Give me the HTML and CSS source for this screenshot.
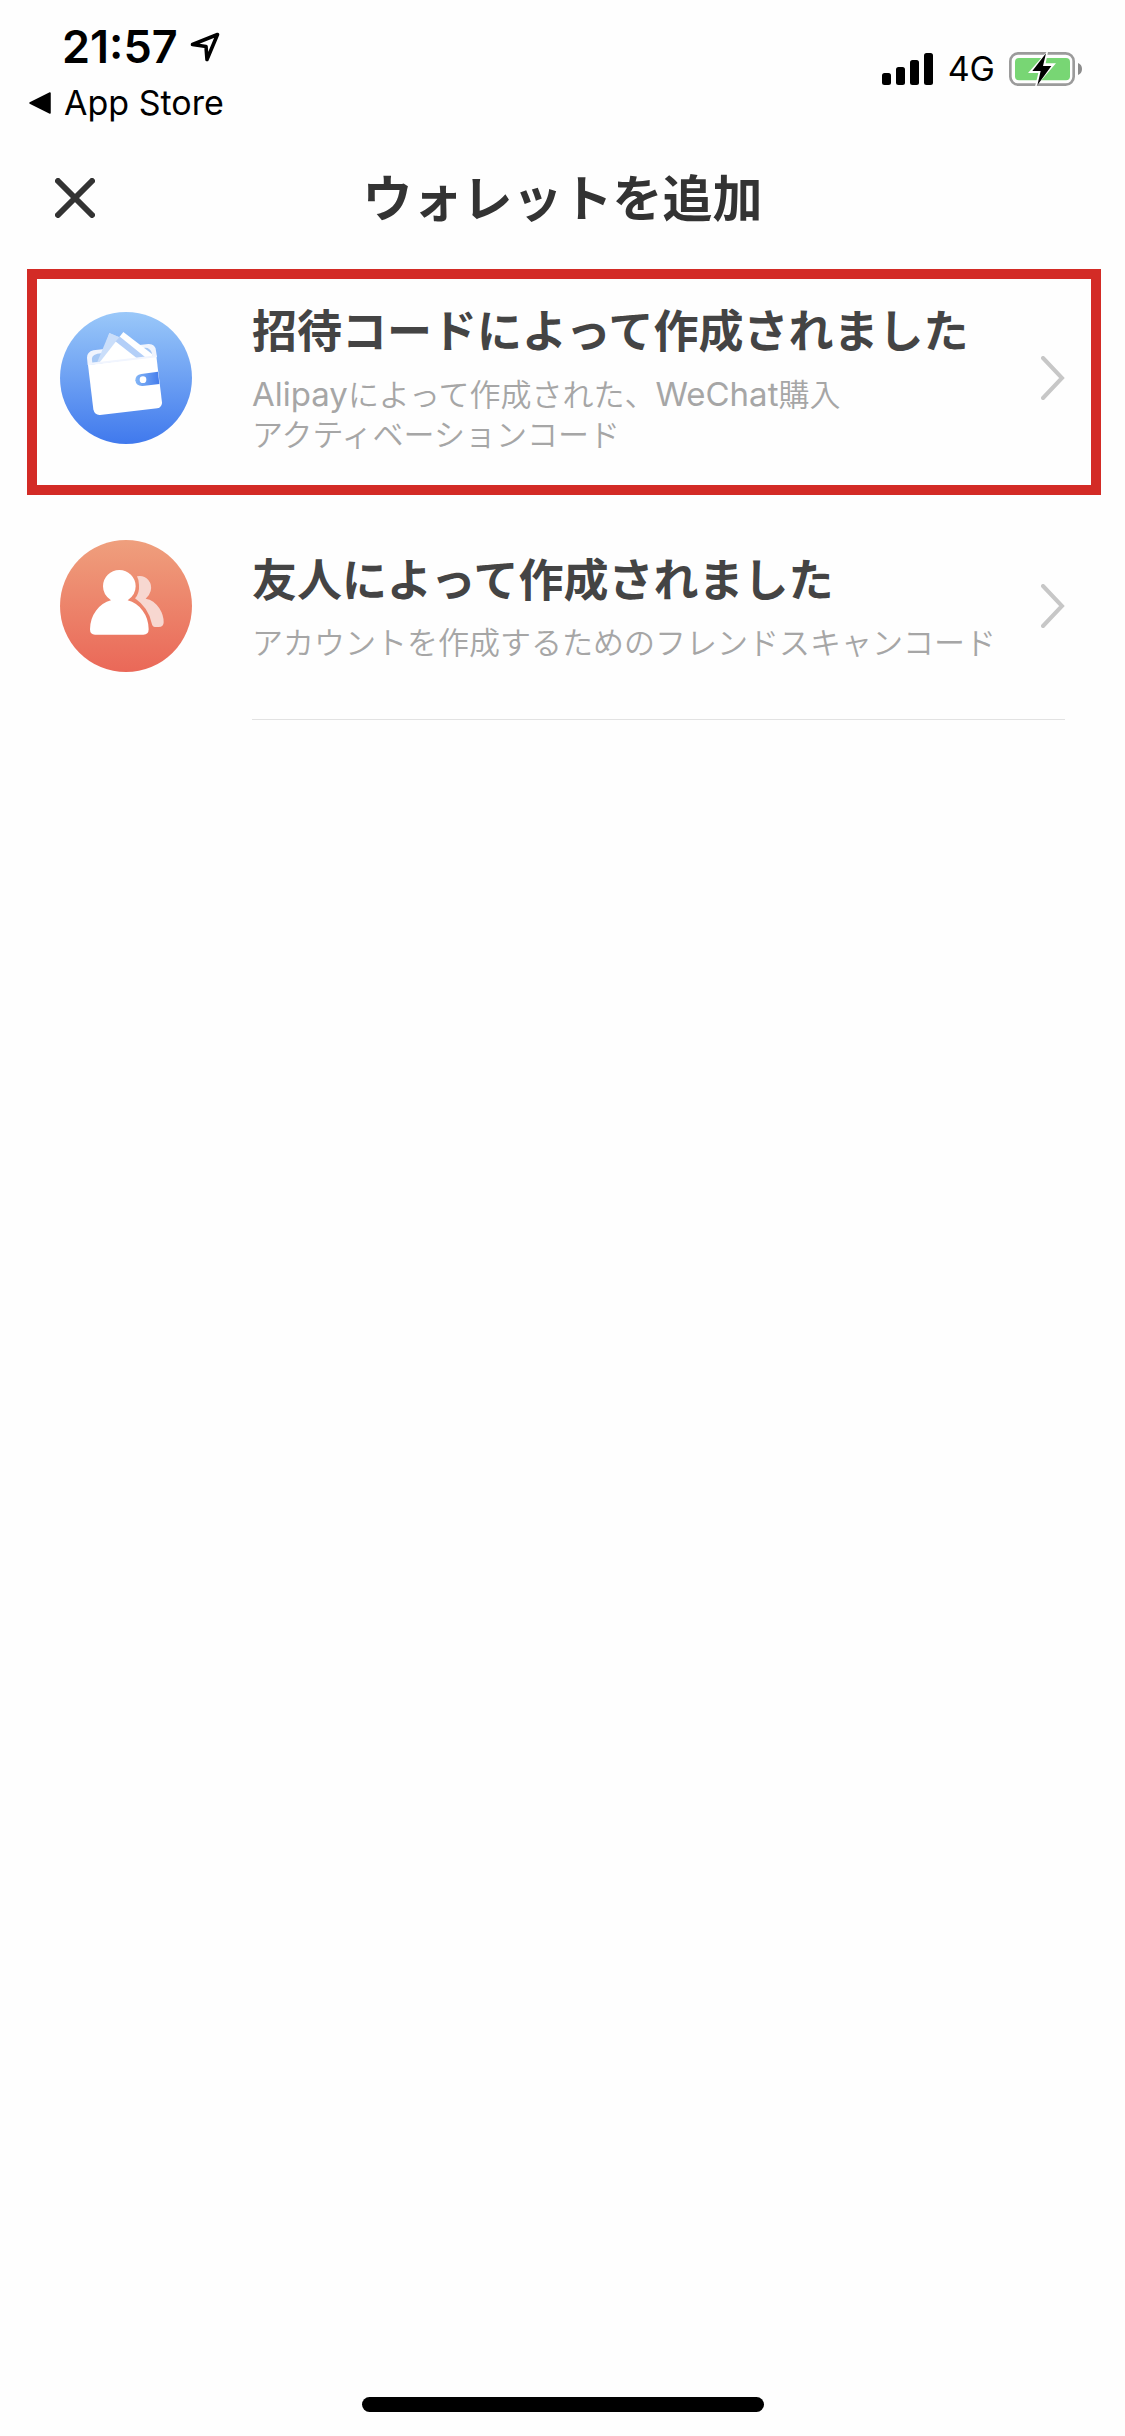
FILE: index.html
```html
<!DOCTYPE html>
<html lang="ja">
<head>
<meta charset="utf-8">
<meta name="viewport" content="width=device-width, initial-scale=1">
<title>ウォレットを追加</title>
<link rel="stylesheet" href="styles.css">
</head>
<body>
<div class="screen">
  <div class="status">
    <div class="status-left">
      <div class="clock">
        <time>21:57</time>
        <svg class="location" viewBox="0 0 30 30" aria-hidden="true"><path d="M2.500 12.500 L27.500 2.500 L17 27.500 L16 14.500 Z" fill="none" stroke="#000" stroke-width="3.600" stroke-linejoin="round"/></svg>
      </div>
      <a class="back" href="#">
        <svg class="back-arrow" viewBox="0 0 22 22" aria-hidden="true"><path d="M1 11 L21 1 V21 Z" stroke="#000" stroke-width="1.500" stroke-linejoin="round"/></svg>
        <span>App Store</span>
      </a>
    </div>
    <div class="status-right">
      <svg class="signal" viewBox="0 0 52 32" aria-hidden="true">
        <rect x="0" y="20" width="9" height="12" rx="2.500"/>
        <rect x="14" y="14" width="9" height="18" rx="2.500"/>
        <rect x="28" y="7" width="9" height="25" rx="2.500"/>
        <rect x="42" y="0" width="9" height="32" rx="2.500"/>
      </svg>
      <span class="network">4G</span>
      <svg class="battery" viewBox="447 66 219 102" aria-hidden="true">
        <rect x="451" y="70" width="190" height="94" rx="24" fill="none" stroke="#9b9b9b" stroke-width="8"/>
        <rect x="465" y="84" width="165" height="67" rx="12" fill="#78d674"/>
        <path d="M654 99 Q666 104 666 117 Q666 130 654 135 Z" fill="#8c8c8c"/>
        <path d="M565 60 L504 129 H535 L524 174 L588 100 H557 Z" fill="#fefefe"/>
        <path d="M558 70 L517 123 H542 L532 166 L574 108 H549 Z" fill="#000"/>
      </svg>
    </div>
  </div>

  <header class="nav">
    <button class="close" type="button" aria-label="閉じる">
      <svg viewBox="0 0 40 40" aria-hidden="true"><path d="M3 3 L37 37 M37 3 L3 37" stroke="#333" stroke-width="6" stroke-linecap="round"/></svg>
    </button>
    <h1>ウォレットを追加</h1>
  </header>

  <main>
    <ul class="options">
      <li class="option highlighted">
        <a class="option-link" href="#">
          <svg class="option-icon" viewBox="120 156 396 396" aria-hidden="true">
            <defs>
              <linearGradient id="blue" x1="0" y1="0" x2="0" y2="1"><stop offset="0" stop-color="#9ac8f9"/><stop offset="1" stop-color="#4079ed"/></linearGradient>
              <linearGradient id="clasp" x1="0" y1="0" x2="1" y2="0"><stop offset="0" stop-color="#84b6f6"/><stop offset="1" stop-color="#447cec"/></linearGradient>
            </defs>
            <circle cx="318" cy="354" r="198" fill="url(#blue)"/>
            <path d="M203 315 L201 293 Q201 276 220 271 L385 252 Q406 251 408 272 L411 291 Z" fill="#f0f4fd"/>
            <path d="M217 308 Q210 286 232 281 L370 264 Q389 260 396 280 L397 291 Z" fill="#a6c8f5"/>
            <path d="M268 219 L298 232 L262 306 L231 308 Z" fill="#cadefa"/>
            <path d="M310 216 L397 283 L396 291 L238 308 Z" fill="#fff"/>
            <path d="M298 229 L376 292 L350 294 L284 242 Z" fill="#b3cff8"/>
            <path d="M268 219 L298 232 L286 245 L257 252 Z" fill="#cadefa"/>
            <path d="M204 315 L409 289 L426 427 Q427 441 412 445 L240 465 Q224 466 220 448 Z" fill="#fff"/>
            <path d="M204 310 L409 286 L410 292 L204 316 Z" fill="#f1f5fe"/>
            <path d="M414 335 L364 342 Q346 345 346 361 Q348 379 368 378 L418 372 Z" fill="url(#clasp)"/>
            <circle cx="369" cy="359" r="10" fill="#fff"/>
          </svg>
          <span class="option-body">
            <span class="option-text">
              <strong>招待コードによって作成されました</strong>
              <small><span class="latin">Alipay</span>によって作成された、<span class="latin">WeChat</span>購入<br>アクティベーションコード</small>
            </span>
            <svg class="chevron" viewBox="0 0 24 44" aria-hidden="true"><path d="M2 2 L21 22 L2 42" fill="none" stroke="#c7c7c7" stroke-width="4" stroke-linecap="round"/></svg>
          </span>
        </a>
      </li>
      <li class="option">
        <a class="option-link" href="#">
          <svg class="option-icon" viewBox="120 120 396 396" aria-hidden="true">
            <defs>
              <linearGradient id="coral" x1="0" y1="0" x2="0" y2="1"><stop offset="0" stop-color="#ef9f7d"/><stop offset="1" stop-color="#ea6858"/></linearGradient>
            </defs>
            <circle cx="318" cy="318" r="198" fill="url(#coral)"/>
            <path d="M351 229 Q372 225 385 240 Q397 255 392 273 Q388 288 377 296 Q402 300 418 325 Q431 345 431 367 Q431 381 416 381 H405 Q397 381 395 370 Q386 324 345 295 Q359 280 357 255 Q357 240 351 229 Z" fill="#f7d7d0"/>
            <path d="M273 301 Q249 285 249 259 A49 49 0 0 1 347 259 Q347 285 323 301 Q350 308 368 332 Q386 356 386 388 Q386 404 370 404 H225 Q210 404 210 388 Q210 356 228 332 Q246 308 273 301 Z" fill="#fff"/>
          </svg>
          <span class="option-body">
            <span class="option-text">
              <strong>友人によって作成されました</strong>
              <small>アカウントを作成するためのフレンドスキャンコード</small>
            </span>
            <svg class="chevron" viewBox="0 0 24 44" aria-hidden="true"><path d="M2 2 L21 22 L2 42" fill="none" stroke="#c7c7c7" stroke-width="4" stroke-linecap="round"/></svg>
          </span>
        </a>
      </li>
    </ul>
  </main>

  <div class="home-indicator"></div>
</div>
</body>
</html>
```

FILE: styles.css
```css
* {
  box-sizing: border-box;
}

body {
  margin: 0;
  background: #fefefe;
  color: #000;
  font-family: Inter, "Noto Sans CJK JP", sans-serif;
}

svg {
  display: block;
  flex: none;
}

a {
  color: inherit;
  text-decoration: none;
}

.screen {
  display: flex;
  flex-direction: column;
  min-height: 100vh;
}

/* Status bar */
.status {
  display: flex;
  justify-content: space-between;
  align-items: flex-start;
  padding: 20px 43px 9px 29px;
}

.status-left {
  display: flex;
  flex-direction: column;
  gap: 9px;
}

.clock {
  display: flex;
  align-items: center;
  gap: 12px;
  padding-left: 33px;
  font-size: 45px;
  font-weight: 600;
  line-height: 54px;
}

.location {
  width: 30px;
  height: 30px;
}

.back {
  display: flex;
  align-items: center;
  gap: 13px;
  font-size: 34px;
  line-height: 40px;
}

.back-arrow {
  width: 22px;
  height: 22px;
}

.status-right {
  display: flex;
  align-items: center;
  gap: 14px;
  padding-top: 29px;
  font-size: 34px;
  line-height: 40px;
}

.signal {
  width: 52px;
  height: 32px;
}

.battery {
  width: 73px;
  height: 34px;
}

/* Title bar */
.nav {
  display: grid;
  grid-template-columns: 1fr auto 1fr;
  align-items: center;
  height: 132px;
  padding: 0 55px;
}

.close {
  width: 40px;
  height: 40px;
  padding: 0;
  border: 0;
  background: none;
}

.close svg {
  width: 100%;
  height: 100%;
}

.nav h1 {
  margin: 0;
  padding-bottom: 6px;
  color: #333;
  font-family: "Noto Sans CJK JP", sans-serif;
  font-size: 50px;
  font-weight: 700;
  line-height: 60px;
}

/* Wallet options */
.options {
  margin: 0;
  padding: 0;
  list-style: none;
}

.option {
  position: relative;
}

.option-link {
  display: flex;
  align-items: center;
  gap: 60px;
  padding: 0 60px;
}

.option-icon {
  width: 132px;
  height: 132px;
}

.option-body {
  display: flex;
  flex: 1;
  align-items: center;
  justify-content: space-between;
  min-height: 228px;
  border-bottom: 1px solid #e2e2e2;
}

.option-text {
  display: flex;
  flex-direction: column;
  gap: 18px;
  padding-top: 2px;
}

.option-text strong {
  color: #444;
  font-family: "Noto Sans CJK JP", sans-serif;
  font-size: 45px;
  font-weight: 700;
  line-height: 54px;
}

.option-text small {
  color: #a6a6a6;
  font-size: 31px;
  font-weight: 350;
  line-height: 40px;
}

.latin {
  font-size: 33px;
  font-weight: 400;
}

.chevron {
  width: 24px;
  height: 44px;
}

.highlighted .option-body {
  border-bottom-color: transparent;
}

.highlighted::after {
  content: "";
  position: absolute;
  inset: 5px 24px -3px 27px;
  border: 10px solid #d32b26;
  pointer-events: none;
}

.home-indicator {
  width: 402px;
  max-width: 60%;
  height: 15px;
  margin: auto auto 24px;
  border-radius: 8px;
  background: #000;
}
```
